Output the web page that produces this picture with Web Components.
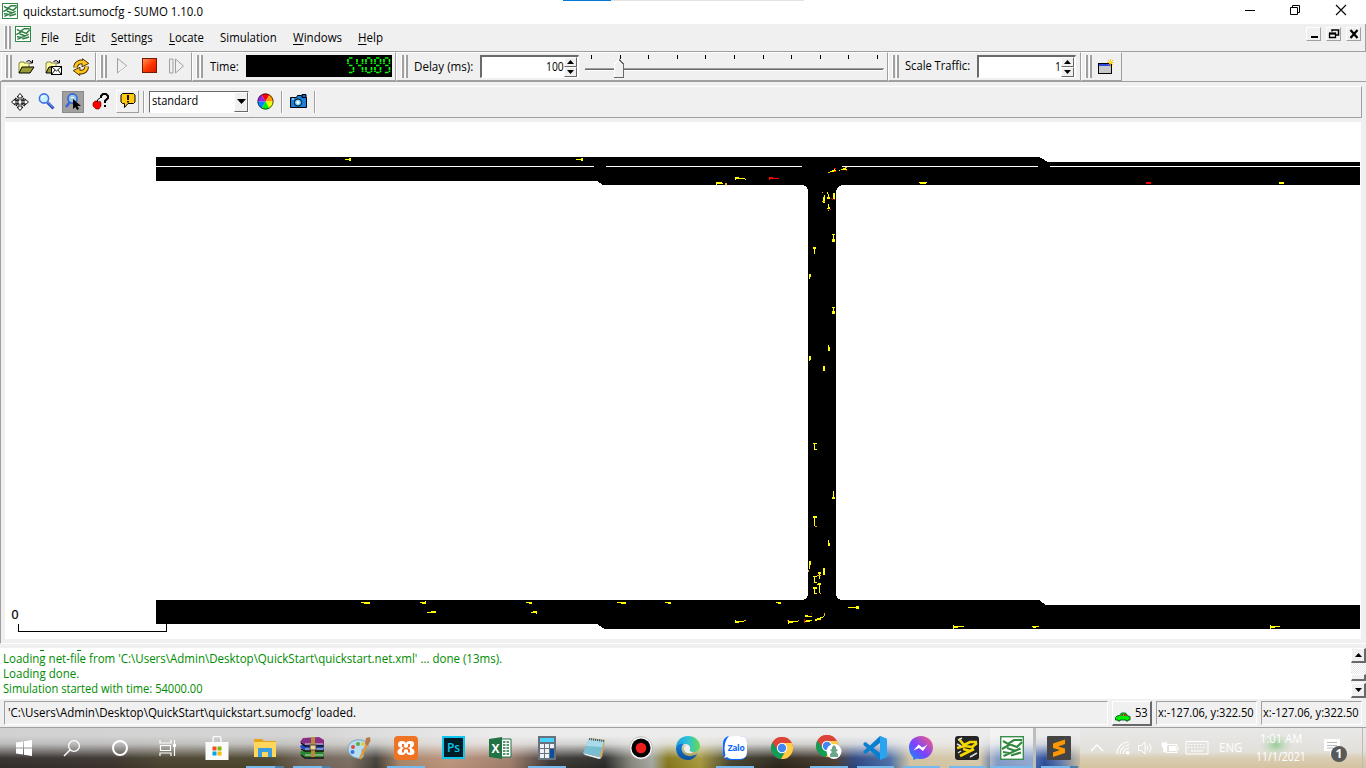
<!DOCTYPE html>
<html lang="en">
<head>
<meta charset="utf-8">
<title>quickstart.sumocfg - SUMO 1.10.0</title>
<style>
html,body{margin:0;height:768px;overflow:hidden;background:#f0f0f0}
body{font:12px/15px "Open Sans","Noto Sans",sans-serif;color:#000}
</style>
</head>
<body>
<sumo-app></sumo-app>
<script>
const def=(name,html,init)=>customElements.define(name,class extends HTMLElement{
  constructor(){super();this.attachShadow({mode:'open'}).innerHTML=html;}
  connectedCallback(){if(init)init.call(this,this.shadowRoot);}
});

/* ---------- icon library ---------- */
const netLines=`M3 5 8 8 14 4 22 4M2 13 10 8.500 17 11 22 6M3.500 20 20.500 12.500M7 12l9 3M3 16l6 1M11 19.500l10-3`;
const logo=`<rect x=".5" y=".5" width="15" height="15" fill="#fff" stroke="#2f8b45"/><path transform="scale(.667)" d="${netLines}" fill="none" stroke="#2f7f42" stroke-width="2.200"/>`;
const folder=`<path d="M1 14V4h1V3h4v1h5v4" fill="#ffff9c" stroke="#84844a"/><path d="M1 14 4 8h12l-4 6z" fill="#9a9a35" stroke="#000"/><path d="M8.500 2.500Q11 0 14 3.500M14.500 1v3H11.500" fill="none" stroke="#000"/>`;
const chrome=`<circle cx="12" cy="12" r="11" fill="#db4437"/><path d="M2.500 6.500A11 11 0 0 0 11 23l5-8.700L12 12l-4 2.300z" fill="#0f9d58"/><path d="M12 7h9.800A11 11 0 0 1 11 23l5.200-9z" fill="#ffcd40"/><path d="M2.500 6.500 8 14 12 7h9.800A11 11 0 0 0 2.500 6.500" fill="#db4437"/><circle cx="12" cy="12" r="5.200" fill="#fff"/><circle cx="12" cy="12" r="4.200" fill="#4285f4"/>`;
const ICONS={
logo:['16',logo],
open:['17',folder],
openview:['17',folder+`<rect x="6.500" y="7.500" width="10" height="8" fill="#fff" stroke="#000"/><path d="M7 8l4.500 4 4.500-4M7 15l3-4M16 15l-3-4" fill="none" stroke="#000" stroke-width=".9"/>`],
reload:['18',`<path d="M3.600 9.500A5.500 5.500 0 0 1 12 4.800M14.600 8.500A5.500 5.500 0 0 1 6.200 13.300" fill="none" stroke="#4a3300" stroke-width="4.600"/><path d="M10.500 .8 16.800 5.500 10 8.800zM7.800 17.500 1.200 12.500 8 9.300z" fill="#ffc41f" stroke="#4a3300"/><path d="M3.600 9.500A5.500 5.500 0 0 1 12 4.800M14.600 8.500A5.500 5.500 0 0 1 6.200 13.300" fill="none" stroke="#ffc41f" stroke-width="2.700"/>`],
play:['16',`<path d="M3.500 .5v14.500L13 8z" fill="#f0f0f0" stroke="#a0a0a0"/><path d="M4.500 15 14 8" stroke="#fff"/>`],
stop:['16',`<defs><linearGradient id="g" x2="1" y2="1"><stop stop-color="#ff9a68"/><stop offset=".5" stop-color="#ff3800"/><stop offset="1" stop-color="#d01c00"/></linearGradient></defs><rect x=".5" y=".5" width="14" height="14" fill="url(#g)" stroke="#781800"/>`],
step:['16',`<path d="M.5 1v14h3.500V1zM6.500 1v14L14.500 8z" fill="#f0f0f0" stroke="#a0a0a0"/>`],
newwin:['17',`<rect x=".5" y="4.500" width="13" height="10" fill="#c8c8c8" stroke="#000"/><rect x="1" y="5" width="12" height="2" fill="#3048e0"/><path d="M12.500 0v8M9 3.500h7M10 1l5 5M15 1l-5 5" stroke="#ffb500" stroke-dasharray="1.500 .6"/><rect x="11.500" y="2.500" width="2" height="2" fill="#fff200"/>`],
move:['18',`<path d="M9 .5 12 4h-2v3.500L13 5l-.5 2.500L10.500 8H14V6l3.500 3L14 12v-2h-3.500l2.500.5L13.500 13 10 10.500V14h2l-3 3.500L6 14h2v-3.500L5 13l.5-2.500L7.500 10H4v2L.5 9 4 6v2h3.500L5 7.500 4.500 5 8 7.500V4H6z" fill="#fff" stroke="#000" stroke-width=".9"/>`],
zoom:['17',`<path d="M9.500 9.500 15.500 15.500" stroke="#2248c0" stroke-width="3"/><path d="M9.500 9 15 14.500" stroke="#83b9ff"/><circle cx="6" cy="5.500" r="4.600" fill="#c9f2ff" stroke="#4274e8" stroke-width="1.600"/><path d="M3.500 5Q4 3 6 3" fill="none" stroke="#fff" stroke-width="1.500"/>`],
zoomsel:['17',`<path d="M5 9 1 14" stroke="#3564e0" stroke-width="2.400"/><circle cx="7.500" cy="5.500" r="4.600" fill="#9fc8dc" stroke="#3564e0" stroke-width="1.600"/><path d="M8 6v10l2.500-2 1.500 3 2-1L12.500 13h3.500z" fill="#000"/><path d="M6 4.500h3" stroke="#fff"/>`],
what:['17',`<path d="M9 5V3l2-2h3l2 2v2l-3 3v2M13 12v2" fill="none" stroke="#000" stroke-width="2"/><path d="M9 5.500h1" stroke="#fff"/><path d="M1 10l2-2h2l1 1 2-1 1 2v3l-2 3H4l-3-3z" fill="#f00" stroke="#600" stroke-width=".6"/><path d="M5 9Q5 6 8 5" fill="none" stroke="#000"/>`],
tip:['16',`<path d="M2.500.5h11l1.500 1.500v7l-1.500 1.500H8L4.500 14.500v-4h-2L1 9V2z" fill="#ffc90e" stroke="#000"/><path d="M8 2v5M8 8v1.500" stroke="#000" stroke-width="1.800"/>`],
wheel:['17',`<g><path d="M8.500 8.500 4.500 1.600A8 8 0 0 1 12.500 1.600z" fill="#f00"/><path d="M8.500 8.500 12.500 1.600A8 8 0 0 1 16.500 8.500z" fill="#ff9c00"/><path d="M8.500 8.500H16.500A8 8 0 0 1 12.500 15.400z" fill="#ef0"/><path d="M8.500 8.500 12.500 15.400A8 8 0 0 1 4.500 15.400z" fill="#0e1"/><path d="M8.500 8.500 4.500 15.400A8 8 0 0 1 .5 8.500z" fill="#08f"/><path d="M8.500 8.500H.5A8 8 0 0 1 4.500 1.600z" fill="#a020e0"/></g><circle cx="8.500" cy="8.500" r="7.600" fill="none" stroke="#222" stroke-width=".8"/>`],
camera:['17',`<path d="M.5 4.500h6l1-2h4l1 2h4v10H.5z" fill="#1c7fd8" stroke="#000"/><path d="M12 1.500h4v3h-4z" fill="#1660c0" stroke="#000"/><circle cx="8" cy="9.500" r="3.600" fill="#70d4ff" stroke="#000"/><circle cx="8" cy="9.500" r="1.500" fill="#fff"/><path d="M2 6h2" stroke="#fff"/>`],
car:['16',`<path d="M.5 9V6.500L2 5l2.500-.5L6.500 2h4L13 5l2 .5V9h-2v1h-2V9H5v1H3V9z" fill="#0e0" stroke="#052" stroke-width=".9"/><path d="M5.500 5 7 3h1v2zM9 3h1.500L12 5H9z" fill="#a33"/>`],
start:['18',`<g fill="#fff"><path d="M1 3.500 8 2.500V8.600H1zM9 2.300 17 1v7.600H9zM1 9.500H8V15.600L1 14.600zM9 9.500H17V17L9 15.800z"/></g>`],
search:['18',`<circle cx="11" cy="7" r="5.400" fill="none" stroke="#fff" stroke-width="1.300"/><path d="M7 11 1 17" stroke="#fff" stroke-width="1.500"/>`],
cortana:['18',`<circle cx="9" cy="9" r="7" fill="none" stroke="#fff" stroke-width="2"/>`],
taskview:['18',`<path d="M1 1v3h11V1M1 17v-3h11v3M1.500 6.500h10v5h-10zM15.500 1v16" fill="none" stroke="#fff" stroke-width="1.200"/><rect x="14" y="5" width="3" height="3" fill="#fff"/>`],
store:['24',`<path d="M8 7V2.500Q8 .5 10 .5h4q2 0 2 2V7" fill="none" stroke="#f8f8f8" stroke-width="1.500"/><path d="M.5 6h23v18H.5z" fill="#fafafa"/><path d="M7.500 10.500h4v4h-4z" fill="#f25022"/><path d="M12.500 10.500h4v4h-4z" fill="#7fba00"/><path d="M7.500 15.500h4v4h-4z" fill="#00a4ef"/><path d="M12.500 15.500h4v4h-4z" fill="#ffb900"/>`],
folder2:['24',`<path d="M1 3h8l2 2h12v16H1z" fill="#e5a51a"/><path d="M1 6h22v15H1z" fill="#ffd65c"/><path d="M5 21v-8q0-1 1-1h12q1 0 1 1v8h-4v-5H9v5z" fill="#3a9de0"/>`],
rar:['26',`<path d="M4 3 20 2l5 3v5L5 11 1 7z" fill="#8a2d86"/><path d="M2 10l22-1 1 6H5l-4-3z" fill="#2248c8"/><path d="M2 16l22-1 1 7H5l-4-3z" fill="#28862c"/><path d="M2 8l4 3h19M2 14l4 2h19M2 20l4 3h19" stroke="#151515" fill="none" stroke-width="1.300"/><path d="M6 9h18M6 14h18M6 20h18" stroke="#d5d5cc"/><path d="M12 2h4v20h-4z" fill="#b78b39"/><rect x="11" y="10" width="6" height="5" fill="#e8d69c" stroke="#543"/>`],
paint:['24',`<path d="M1 13C1 6 8 3 14 4s9 6 6 8-5 0-5 3 3 3 1 6-15 1-15-8z" fill="#b8dcf0" stroke="#78a5c0"/><circle cx="6" cy="11" r="2" fill="#e04a3c"/><circle cx="11" cy="8" r="2" fill="#53ad43"/><circle cx="5.500" cy="16" r="2" fill="#3f72d8"/><circle cx="16" cy="8" r="1.800" fill="#f0c630"/><path d="M13 23 20 8" stroke="#e09a38" stroke-width="2.600"/><path d="m18 8 1-6 4-1 .5 4-3 5z" fill="#b87948"/>`],
xampp:['24',`<rect width="24" height="24" rx="4" fill="#ee7322"/><path d="M8 5q4 0 4 3 0-3 4-3 5 0 4 4-.5 2-3 3 3 1 3.500 3 .5 4-4 4-4 0-4.500-3-.5 3-4.500 3-4.500 0-4-4 .5-2 3.500-3-3-1-3-3-.3-4 4-4z" fill="#fff"/><path d="M8 8h2v3q2 1.500 4 0V8h2v3l-2 1 2 1.500v3h-2v-2.500q-2-1.500-4 0V16.500H8v-3l2-1.500-2-1z" fill="#ee7322"/>`],
ps:['24',`<rect x="2" y="1" width="21" height="21" fill="#001d26" stroke="#0ac5ee" stroke-width="2"/><text x="12.500" y="16" text-anchor="middle" font-size="12" font-weight="600" fill="#0ac5ee" font-family="Open Sans">Ps</text>`],
excel:['24',`<path d="M12 3h11v18H12z" fill="#fff" stroke="#217346"/><path d="M15 6h6M15 9h6M15 12h6M15 15h6M15 18h6" stroke="#217346" stroke-width="1.500"/><path d="M18 4v16" stroke="#fff"/><path d="M1 3 14 1v22L1 21z" fill="#217346"/><text x="7.500" y="16.500" text-anchor="middle" font-size="12" font-weight="700" fill="#fff" font-family="Open Sans">X</text>`],
calc:['24',`<rect x="3" width="18" height="24" fill="#68727f"/><rect x="5" y="2" width="14" height="4" fill="#48d2fa"/><g fill="#eef1f5"><path d="M5 8h4v4H5zM10 8h4v4h-4zM15 8h4v4h-4zM5 13h4v4H5zM10 13h4v4h-4zM5 18h4v4H5zM10 18h4v4h-4z"/></g><path d="M15 13h4v9h-4z" fill="#0d4f9c"/>`],
note:['24',`<path d="M8 2 23 4l-3 17-3 1z" fill="#c9a869"/><path d="M7 3 22 5 17 21 1 17z" fill="#79bdd0"/><path d="M7 3 22 5 20 11 4 10z" fill="#a9dce8"/><path d="M1 17 17 21 20 22 17 23 3 19z" fill="#e8eef0"/><path d="M7 3 22 5" stroke="#456" stroke-dasharray="1 1" stroke-width="2"/>`],
rec:['24',`<circle cx="12" cy="12" r="11.300" fill="#fff" stroke="#999" stroke-width=".6"/><circle cx="12" cy="12" r="9.600"/><circle cx="12" cy="12" r="5.300" fill="#f01d1d"/>`],
edge:['24',`<defs><linearGradient id="e" x2="1"><stop stop-color="#209de5"/><stop offset=".5" stop-color="#2cc3d5"/><stop offset="1" stop-color="#69d94e"/></linearGradient><linearGradient id="f" y2="1" x2="0"><stop stop-color="#0d80d8"/><stop offset="1" stop-color="#0b4f9e"/></linearGradient></defs><path d="M0 12C0 5 5 0 12 0s12 5 12 10c0 4-3 6-7 6-3 0-4-1-3-2.500C15 11 13 8 9 8c-4 0-8 1-9 4z" fill="url(#e)"/><path d="M0 12c1-4 5-5 8-4-2 1-3 4-2 7 2 5 8 7 15 3-2 4-6 6-9 6C5 24 0 19 0 12z" fill="url(#f)"/><path d="M8.500 8C12 8 15 10.500 14 13.500c-1 1.500 0 2.500 3 2.500-1 2-9 2-9-3 0-2 1-3 2.500-4z" fill="#eee"/>`],
zalo:['24',`<rect width="24" height="24" rx="7" fill="#0868ff"/><path d="M6 0h11q7 0 7 7v9q0 7-7 7H9q-3 0-5-2-2 1-3 .5Q3 20 2 17 0 6 6 0z" fill="#fff"/><text x="13" y="14.500" text-anchor="middle" font-size="8.500" font-weight="700" fill="#0868ff" font-family="Open Sans" letter-spacing="-.3">Zalo</text>`],
chrome:['24',chrome],
chrome2:['30',`<g transform="translate(1 1)">${chrome}<circle cx="19" cy="17.500" r="7.500" fill="#fff"/><path d="M15 23v-3l2-2-2-2 2-1v-2l2-2 2 2v2l2 1-2 2 2 2v3z" fill="#6ea68c"/></g>`],
code:['24',`<path d="M17 0 24 3v18l-7 3L7 14.500 2.500 18 .5 17V15L4 12 .5 9V7l2-1L7 9.500zM17 7l-6.500 5 6.500 5z" fill="#0a7fd0"/><path d="M17 0 24 3v18l-7 3z" fill="#2aa4ee"/>`],
mess:['24',`<defs><linearGradient id="m" x2="1" y1="1" y2="0"><stop stop-color="#0695ff"/><stop offset=".45" stop-color="#7c40ff"/><stop offset="1" stop-color="#ff6375"/></linearGradient></defs><path d="M12 0c7 0 12 5 12 11.300S19 23 12 23q-2 0-4-.5L4.500 24 4 21Q0 17.500 0 11.300C0 5 5 0 12 0z" fill="url(#m)"/><path d="m4.500 14.500 5-6 4 3 5-3-4.500 6.500-4-3z" fill="#fff"/>`],
net:['24',`<rect width="24" height="24" rx="3" fill="#242424"/><path d="M4 3 9 9 15 6h7M2 12 10 10 17 11 22 7M5 20l14-7M8 13l7 2" fill="none" stroke="#f5d800" stroke-width="2.700"/><path d="M3 4 7 2M2 8l4 2M15 21l7-4M3 17l3-2" stroke="#ddd" stroke-width="1.500"/>`],
sumo:['24',`<rect x=".7" y=".7" width="22.600" height="22.600" fill="#fff" stroke="#3c8c4c" stroke-width="1.400"/><path d="${netLines}" fill="none" stroke="#34873f" stroke-width="2.200"/>`],
sublime:['24',`<rect width="24" height="24" rx="1" fill="#444"/><path d="m6 7.500 12-4v4.500l-7 2.400 7 2.200v4.400l-12 4v-4.500l7-2.500-7-2z" fill="#ff9800"/>`],
chev:['16',`<path d="m2 11 6-6 6 6" fill="none" stroke="#fff" stroke-width="1.300"/>`],
wifi:['16',`<g fill="none" stroke="#fff" stroke-width="1.200"><path d="M2 14A12 12 0 0 1 14 2M5 14a9 9 0 0 1 9-9M8 14a6 6 0 0 1 6-6M11 14a3 3 0 0 1 3-3"/></g><circle cx="13" cy="13" r="1.500" fill="#fff"/>`],
sound:['16',`<path d="M1.500 5.500h3L8 2v12l-3.500-3.500h-3z" fill="none" stroke="#fff"/><path d="M10 5.500q2 2.500 0 5M12 3.500q4 4.500 0 9" fill="none" stroke="#fff"/>`],
batt:['18',`<path d="M5.500 5.500h10.500v8H5.500zM17 8v3" fill="none" stroke="#fff"/><path d="M8 7h7v5H8z" fill="#fff"/><path d="M1 4h5v3l-1.500 2v4h-2V9L1 7zM2 2v3M5 2v3" fill="#fff" stroke="#fff" stroke-width=".7"/>`],
kbd:['24',`<path d="M1 5.500h22v12.500H1z" fill="none" stroke="#fff"/><path d="M3 8.500h18M3 11.500h18" stroke="#fff" stroke-dasharray="1.500 1.500"/><path d="M6 15h12" stroke="#fff"/>`],
notif:['26',`<path d="M3 2h16v12h-6l-4 4v-4H3z" fill="#fff"/><path d="M6 5.500h10M6 8.500h10M6 11h6" stroke="#bbb"/><circle cx="18" cy="17" r="8" fill="#595959"/><text x="18" y="21.300" font-size="12" font-weight="700" text-anchor="middle" fill="#fff" font-family="Open Sans">1</text>`],
min:['14',`<path d="M2 7.500h10" stroke="#000"/>`],
rest:['14',`<path d="M1.500 4.500h7v7h-7zM3.500 4.500v-2h7v7h-2" fill="none" stroke="#000"/>`],
close:['14',`<path d="m2 2 10 10M12 2 2 12" stroke="#000" stroke-width="1.100"/>`],
mmin:['12',`<path d="M3 9h7" stroke="#000" stroke-width="2"/>`],
mrest:['12',`<path d="M4 3.500V2h6.500v5H8" fill="none" stroke="#000" stroke-width="1.500"/><path d="M1.500 5.500h6v4h-6z" fill="none" stroke="#000" stroke-width="1.300"/><path d="M1 5.500h7" stroke="#000" stroke-width="2"/>`],
mclose:['12',`<path d="m2.500 2 7 8M9.500 2l-7 8" stroke="#000" stroke-width="2.200"/>`]
};
def('ui-icon','<style>:host{display:block;flex:none}svg{display:block}</style>',function(r){
  const [s,b]=ICONS[this.getAttribute('name')];
  this.style.width=this.style.height=s+'px';
  r.innerHTML+=`<svg width="${s}" height="${s}" viewBox="0 0 ${s} ${s}">${b}</svg>`;
});

/* toolbar grip, bevel group, separator */
def('tool-grip','<style>:host{display:flex;gap:1px;flex:none;height:23px}i{width:1px;background:#fff;border-right:2px solid #a0a0a0;box-sizing:content-box}</style><i></i><i></i>');
def('tool-group',`<style>:host{display:flex;flex:none;box-sizing:border-box;height:29px;border:1px solid #a0a0a0;border-top-color:#fff;border-left-color:#fff;padding-left:3px;align-items:flex-start}tool-grip{margin-top:2px}</style><tool-grip></tool-grip><slot></slot>`);
def('tool-sep','<style>:host{display:block;flex:none;width:1px;height:22px;background:#a0a0a0;border-right:1px solid #fff}</style>');
def('raised-box','<style>:host{display:flex;flex:none;align-items:center;justify-content:center;box-sizing:border-box;background:#f0f0f0;border:1px solid #a0a0a0;border-top-color:#fff;border-left-color:#fff}</style><slot></slot>');
def('sunken-box','<style>:host{display:flex;flex:none;align-items:center;box-sizing:border-box;border:1px solid #fff;border-top-color:#a0a0a0;border-left-color:#a0a0a0}</style><slot></slot>');

/* seven-segment clock */
def('lcd-display','<style>:host{display:flex;flex:none;width:146px;height:22px;background:#000;justify-content:flex-end;box-sizing:border-box;padding:2px 1px 0 0}svg{display:block}</style>',function(r){
  const map={5:'afgcd',4:'fgbc',0:'abcdef',8:'abcdefg',9:'abcdfg'};
  const seg={a:'M2 1h4',g:'M2 8.500h4',d:'M2 15.500h4',f:'M1 2v5',b:'M6.500 2v5',e:'M1 10v5',c:'M6.500 10v5'};
  const v=this.getAttribute('value');
  this.setAttribute('role','img');this.setAttribute('aria-label',v);
  r.innerHTML+=`<svg width="44" height="17" stroke="#0f0" stroke-width="1.700" stroke-dasharray="3 .5">${[...v].map((d,i)=>`<g transform="translate(${i*9} 0)">${[...map[d]].map(k=>`<path d="${seg[k]}"/>`).join('')}</g>`).join('')}</svg>`;
});

/* numeric entry with arrows */
def('num-spinner',`<style>:host{display:flex;flex:none;box-sizing:border-box;height:23px;background:#fff;border:1px solid #fff;border-top:2px solid #6a6a6a;border-left:2px solid #6a6a6a;justify-content:flex-end;align-items:center}
.b{display:grid;grid-template-rows:10px 10px;width:13px;height:20px;margin-right:1px}.b i{background:#f0f0f0;box-sizing:border-box;border:1px solid #696969;border-top-color:#fff;border-left-color:#fff;display:flex;align-items:center;justify-content:center}
.b svg{display:block}</style><slot></slot><div class="b"><i><svg width="7" height="4"><path d="M0 4 3.500 0 7 4z"/></svg></i><i><svg width="7" height="4"><path d="M0 0 3.500 4 7 0z"/></svg></i></div>`);
def('delay-slider','<style>:host{display:block;flex:none;width:300px;height:25px}svg{display:block}</style>',function(r){
  let t='';for(let i=0;i<11;i++)t+=`<rect x="${Math.round(6+i*28.600)}" y="1" width="1" height="4"/>`;
  r.innerHTML+=`<svg width="300" height="25" shape-rendering="crispEdges">${t}<rect y="14" width="299" height="1" fill="#a0a0a0"/><rect y="15" width="298" height="1" fill="#696969"/><rect x="1" y="16" width="298" height="1" fill="#fff"/><path d="M29 10 34 5.500 39 10V23H29z" fill="#f0f0f0"/><path d="M29.500 23V10L34 5.500" fill="none" stroke="#fff"/><path d="M34 5.500 38.500 10V23.500H29" fill="none" stroke="#696969"/></svg>`;
});
def('combo-box',`<style>:host{display:flex;flex:none;box-sizing:border-box;width:100px;height:22px;background:#fff;border:1px solid #fff;border-top:1px solid #696969;border-left:1px solid #696969;padding-left:2px;align-items:center;justify-content:space-between}
i{width:14px;height:20px;background:#f0f0f0;box-sizing:border-box;border:1px solid #696969;border-top-color:#fff;border-left-color:#fff;display:flex;align-items:center;justify-content:center}</style><slot></slot><i><svg width="9" height="5"><path d="M0 0h9L4.500 5z"/></svg></i>`);

/* chrome */
def('title-bar',`<style>:host{display:flex;flex:none;position:relative;height:24px;background:#fff;align-items:center;padding:0 18px 0 2px}
.p{position:absolute;left:563px;top:0;width:241px;height:1px;background:linear-gradient(90deg,#0078d7 48px,#e3e3e3 48px)}
.t{margin:0 auto 0 5px}.w{display:flex;gap:31.500px;margin-top:-4px}ui-icon.i{margin-top:-2px}</style>
<div class="p"></div><ui-icon class="i" name="logo"></ui-icon><fit-text class="t" w="180">quickstart.sumocfg - SUMO 1.10.0</fit-text><div class="w"><ui-icon name="min"></ui-icon><ui-icon name="rest"></ui-icon><ui-icon name="close"></ui-icon></div>`);
def('menu-bar',`<style>:host{display:flex;flex:none;box-sizing:border-box;height:28px;border-bottom:1px solid #a0a0a0;border-right:1px solid #a0a0a0;padding:2px 4px 0 4px;align-items:flex-start}
.l{margin-left:4px}.m{display:flex;gap:16px;margin:5px auto 0 10px}.b{display:flex;gap:5px;margin-top:1px}raised-box{width:15px;height:14px}</style>
<tool-grip></tool-grip><ui-icon class="l" name="logo"></ui-icon>
<div class="m"><fit-text w="18"><u>F</u>ile</fit-text><fit-text w="20"><u>E</u>dit</fit-text><fit-text w="42"><u>S</u>ettings</fit-text><fit-text w="35"><u>L</u>ocate</fit-text><fit-text w="57">Simulation</fit-text><fit-text w="49"><u>W</u>indows</fit-text><fit-text w="25"><u>H</u>elp</fit-text></div>
<div class="b"><raised-box><ui-icon name="mmin"></ui-icon></raised-box><raised-box><ui-icon name="mrest"></ui-icon></raised-box><raised-box><ui-icon name="mclose"></ui-icon></raised-box></div>`);
def('main-toolbar',`<style>:host{display:flex;flex:none;height:29px;border-bottom:1px solid #a0a0a0;padding-left:1px}
ui-icon{margin-top:6px}.lb{margin-top:7px}</style>
<tool-group style="width:95px"><ui-icon name="open" style="margin-left:6px"></ui-icon><ui-icon name="openview" style="margin-left:10px"></ui-icon><ui-icon name="reload" style="margin-left:10px;margin-top:5px"></ui-icon></tool-group>
<tool-group style="width:96px"><ui-icon name="play" style="margin:5px 0 0 7px"></ui-icon><ui-icon name="stop" style="margin:5px 0 0 12px"></ui-icon><ui-icon name="step" style="margin:5px 0 0 11px"></ui-icon></tool-group>
<tool-group style="width:204px"><fit-text class="lb" w="29" style="margin-left:7px">Time:</fit-text><lcd-display value="54089" style="margin:2px 0 0 7px"></lcd-display></tool-group>
<tool-group style="width:492px;padding-left:4px"><fit-text class="lb" w="59" style="margin-left:6px">Delay (ms):</fit-text><num-spinner style="width:99px;margin:2px 0 0 7px"><fit-text w="18">100</fit-text></num-spinner><delay-slider style="margin:1px 0 0 6px"></delay-slider></tool-group>
<tool-group style="width:193px"><fit-text w="65" style="margin:6px 0 0 6px">Scale Traffic:</fit-text><num-spinner style="width:99px;margin:2px 0 0 7px"><fit-text w="6">1</fit-text></num-spinner></tool-group>
<tool-group style="width:41px"><ui-icon name="newwin" style="margin-left:6px"></ui-icon></tool-group>`);
def('view-toolbar',`<style>:host{display:flex;flex:none;box-sizing:border-box;height:32px;border:1px solid #a0a0a0;border-top-color:#fff;border-left-color:#fff;padding-left:5px;align-items:center}
.on{display:flex;box-sizing:border-box;width:22px;height:22px;background:#a0a0a0;border:1px solid #8a8a8a;align-items:center;justify-content:center}ui-icon,tool-sep,.on,combo-box,raised-box{margin-top:-1px}</style>
<ui-icon name="move"></ui-icon><ui-icon name="zoom" style="margin-left:9px"></ui-icon><div class="on" style="margin-left:7px"><ui-icon name="zoomsel"></ui-icon></div><ui-icon name="what" style="margin-left:8px"></ui-icon><raised-box style="width:23px;height:23px;margin-left:7px"><ui-icon name="tip"></ui-icon></raised-box><tool-sep style="margin-left:4px;margin-right:4px"></tool-sep><combo-box><fit-text w="46">standard</fit-text></combo-box><ui-icon name="wheel" style="margin-left:8px;margin-right:7px"></ui-icon><tool-sep></tool-sep><ui-icon name="camera" style="margin-left:7px;margin-right:7px"></ui-icon><tool-sep></tool-sep>`);

/* road network; coordinates are window pixels via the viewBox */
def('network-view','<style>:host{display:block;flex:none;height:517px;width:1356px;background:#fff}svg{display:block}</style>',function(r){
  const Y='#ff0',R='#f00',O='#fa0';
  const cars=[
  [345,159,6,1],[349,158,2,3],[576,159,6,1],[581,158,2,3],[716,182,6,2],[716,184,1,1],[722,183,1,1],[725,183,2,2,O],
  [735,177,4,2],[735,179,1,1],[738,178,7,1],[745,179,1,1],[769,177,4,2,R],[769,179,1,1,R],[772,178,7,1,R],
  [828,172,2,1,O],[830,171,6,1],[832,170,4,1],[834,169,1,1],[834,168,2,1,R],[834,171,2,1,R],[839,170,1,1],[841,169,6,1],[843,168,3,1],[845,167,2,1,O],[846,170,1,1,R],
  [919,182,8,1],[920,183,6,1],[1146,182,5,2,R],[1279,182,5,2],
  [822,192,1,1,O],[824,195,1,2],[823,197,2,6],[822,201,3,1,O],[827,192,1,2],[828,194,1,3],[827,197,3,2],[831,198,1,1,R],[833,193,2,6],[832,199,1,1,R],[834,199,1,1,R],[828,204,1,3],[828,207,2,2],[827,208,3,1],[830,209,1,1,R],[828,210,1,1,O],
  [833,234,1,7],[832,234,3,1],[832,239,3,3],[813,247,3,2],[814,248,1,6],[809,274,2,3],[809,276,1,3],[833,307,1,6],[832,307,3,1],[832,311,3,3],[828,345,1,6],[829,347,1,4],[809,356,2,4],[809,360,1,1],[823,366,2,5],
  [813,443,4,1],[814,444,1,6],[814,449,3,1],[833,491,1,6],[832,497,3,2],[813,516,4,2],[814,518,1,8],[815,526,2,1,O],[828,540,1,6],[829,543,1,3],
  [809,561,2,4],[809,565,1,4],[808,570,1,2,O],[823,568,2,7],[818,572,3,2],[819,574,1,5],[817,575,4,1,O],[813,576,4,1],[814,577,1,5],[814,582,3,1],[818,583,3,2],[819,585,1,8],[817,584,4,1],[813,587,4,2],[814,589,1,4],[814,593,3,1],[820,593,1,1,O],
  [361,602,9,1],[364,603,6,1],[420,602,6,1],[422,603,4,1],[425,601,1,2],[427,612,9,1],[431,611,5,1],[526,602,6,1],[529,603,3,1],[531,612,6,1],[533,611,4,1],[536,612,1,2],[617,602,9,1],[621,603,5,1],[665,602,6,1],[668,603,3,1],[776,602,5,1],[778,603,3,1],
  [735,620,1,3],[736,621,3,2],[738,621,6,1],[744,620,2,1,O],[787,620,1,1,R],[788,620,1,4],[788,621,5,2],[792,621,6,1],[798,620,1,1,O],[805,615,3,2],[806,616,6,1],[811,613,1,1,R],[804,619,1,4,R],[805,621,5,1],[806,620,6,1],[815,619,2,2],[817,618,4,2],[820,617,3,1],[823,616,1,1],[824,613,1,3,O],
  [848,607,9,1],[856,606,3,3],[953,625,1,4],[954,626,4,2],[957,626,7,1],[1032,626,7,1],[1033,627,3,1],[1270,625,1,4],[1271,626,4,2],[1274,626,6,1]];
  r.innerHTML+=`<svg width="1356" height="517" viewBox="5 122 1356 517" shape-rendering="crispEdges">
  <path d="M156 157H1039L1043 159 1048 162H1360V185H843Q837 186 836 191V595Q837 599 841 600H1039L1046 605H1360V629H605L603 628 597 624H156V600H803Q807 599 808 594V191Q807 186 803 185H603L597 181H156Z"/>
  <path d="M156 166.500H594M606 166.500H802M842 166.500H1038M1050 166.500H1360" stroke="#fff"/>
  ${cars.map(c=>`<rect x="${c[0]}" y="${c[1]}" width="${c[2]}" height="${c[3]}" fill="${c[4]||Y}"/>`).join('')}
  <path d="M18.500 624V631.500H166.500V624" fill="none" stroke="#000"/>
  <text x="11.500" y="619" font-size="12.500" font-family="Liberation Sans" stroke="#000" stroke-width=".2">0</text></svg>`;
});

def('log-pane',`<style>:host{display:flex;flex:none;height:51px;background:#fff;color:#008c00}
.t{flex:1;padding:3.500px 0 0 3px;background:linear-gradient(#008c00,#008c00) 40px 2px/4px 1px no-repeat,linear-gradient(#008c00,#008c00) 77px 2px/4px 1px no-repeat}fit-text{display:block}
.s{width:15px;display:flex;flex-direction:column;background:repeating-conic-gradient(#fff 0 25%,#e6e6e6 0 50%) 0 0/2px 2px}.s raised-box{width:15px;height:15px;border-color:#fff #696969 #696969 #fff;border-width:1px 2px 2px 1px}</style>
<div class="t"><fit-text w="499">Loading net-file from 'C:\\Users\\Admin\\Desktop\\QuickStart\\quickstart.net.xml' ... done (13ms).</fit-text><fit-text w="76">Loading done.</fit-text><fit-text w="200">Simulation started with time: 54000.00</fit-text></div>
<div class="s"><raised-box><svg width="7" height="4"><path d="M0 4 3.500 0 7 4z"/></svg></raised-box><raised-box style="height:7px;margin:11px 0 2px"></raised-box><raised-box><svg width="7" height="4"><path d="M0 0 3.500 4 7 0z"/></svg></raised-box></div>`);
def('status-bar',`<style>:host{display:flex;flex:none;box-sizing:border-box;height:29px;border-bottom:1px solid #a0a0a0;padding:2px 4px 0;gap:4px}
sunken-box{height:24px;padding-left:3px;width:101px}.m{flex:1}raised-box{width:40px;height:25px;border-color:#fff #696969 #696969 #fff;border-width:1px 2px 2px 1px;gap:4px}raised-box ui-icon{margin-top:11px}sunken-box.c{padding-left:1px}</style>
<sunken-box class="m"><fit-text w="348">'C:\\Users\\Admin\\Desktop\\QuickStart\\quickstart.sumocfg' loaded.</fit-text></sunken-box><raised-box><ui-icon name="car"></ui-icon><fit-text w="13">53</fit-text></raised-box><sunken-box class="c"><fit-text w="96">x:-127.06, y:322.50</fit-text></sunken-box><sunken-box class="c"><fit-text w="96">x:-127.06, y:322.50</fit-text></sunken-box>`);

/* Windows taskbar */
def('task-item',`<style>:host{display:flex;flex:none;box-sizing:border-box;width:47px;height:40px;align-items:center;justify-content:center;position:relative}
:host([run])::after{content:"";position:absolute;left:5px;right:4px;bottom:0;height:2px;background:#76b9ed}
:host([multi])::after{background:linear-gradient(90deg,#76b9ed 29px,#4d80a6 29px)}
:host([active]){background:#ffffff60;border-right:3px solid #bdbdbd}:host([active])::after{left:0;right:0}</style>`,function(r){
  const i=document.createElement('ui-icon');i.setAttribute('name',this.getAttribute('icon'));r.append(i);
});
def('task-bar',`<style>:host{display:flex;flex:none;height:40px;position:relative;color:#fff;background:#ececec;isolation:isolate;overflow:hidden}
.bg{position:absolute;inset:0;z-index:-1;background:linear-gradient(90deg,#120b08 0,#21160f 110px,#352c13 160px,#3d3515 270px,#665546 300px,#79695b 350px,#37342c 376px,#aa8463 400px,#bd9278 450px,#9b7a68 510px,#393431 550px,#272926 605px,#86867c 632px,#a2a59e 652px,#827418 668px,#a39639 700px,#43412e 730px,#29241a 780px,#46382a 835px,#28437f 855px,#486ba5 890px,#d0c19e 910px,#d4c6a7 980px,#3158a0 998px,#4c70b0 1032px,#274895 1045px,#5a73a5 1060px,#cfbf9b 1082px,#d2c19c 1366px);-webkit-mask:linear-gradient(transparent 8px,#0002 16px,#0008 23px,#000e 30px,#000);mask:linear-gradient(transparent 8px,#0002 16px,#0008 23px,#000e 30px,#000)}
.sh{position:absolute;inset:0;z-index:-1;background:linear-gradient(90deg,#8884 0,#7773 300px,transparent 500px)}
.r{position:absolute;left:1080px;right:0;top:0;bottom:0;z-index:-1;background:radial-gradient(ellipse 16px 11px at 196px 17px,#9ccc9b 0,#b9d9b680 60%,transparent),linear-gradient(#e8e8e8 0,#e3e0da 24px,#d9cdb3 30px,#d4c39f 40px)}
.w{width:48px}.n{width:46px}.c{display:flex;flex-direction:column;gap:3px;align-items:center;width:52px;margin-left:13px}.tray{display:flex;align-items:center;margin-left:7px}.d{width:1px;height:40px;background:#bbb;margin-left:15px}</style>
<div class="bg"></div><div class="sh"></div><div class="r"></div>
<task-item class="w" icon="start"></task-item><task-item class="w" icon="search"></task-item><task-item class="w" icon="cortana"></task-item><task-item class="w" icon="taskview"></task-item>
<task-item icon="store" style="width:49px"></task-item><task-item icon="folder2" run multi></task-item><task-item icon="rar" run multi></task-item><task-item icon="paint"></task-item><task-item icon="xampp" run></task-item><task-item icon="ps"></task-item><task-item icon="excel"></task-item><task-item icon="calc" run></task-item><task-item icon="note"></task-item><task-item icon="rec"></task-item><task-item icon="edge"></task-item><task-item icon="zalo" run></task-item><task-item icon="chrome"></task-item><task-item icon="chrome2" run></task-item><task-item class="n" icon="code" run></task-item><task-item class="n" icon="mess" run></task-item><task-item class="n" icon="net" run></task-item><task-item class="n" icon="sumo" run active></task-item><task-item class="n" icon="sublime" run multi></task-item>
<div class="tray"><ui-icon name="chev"></ui-icon><ui-icon name="wifi" style="margin-left:10px"></ui-icon><ui-icon name="sound" style="margin-left:6px"></ui-icon><ui-icon name="batt" style="margin-left:8px"></ui-icon><ui-icon name="kbd" style="margin-left:6px"></ui-icon><fit-text w="23" style="margin-left:10px">ENG</fit-text><div class="c"><fit-text w="42">1:01 AM</fit-text><fit-text w="50">11/1/2021</fit-text></div><ui-icon name="notif" style="margin:3px 0 0 14px"></ui-icon><div class="d"></div></div>`);

def('sumo-app',`<style>:host{display:flex;flex-direction:column;width:1366px;height:768px;background:#f0f0f0;overflow:hidden}
.v{display:flex;flex-direction:column;gap:4px;flex:none;box-sizing:border-box;height:562px;border-left:1px solid #a0a0a0;border-bottom:1px solid #fff;padding:4px 4px 4px 4px}.g{height:4px;flex:none}</style>
<title-bar></title-bar><menu-bar></menu-bar><main-toolbar></main-toolbar>
<div class="v"><view-toolbar></view-toolbar><network-view></network-view></div><div class="g"></div>
<log-pane></log-pane><status-bar></status-bar><task-bar></task-bar>`);

/* label condensed horizontally so that it spans exactly w pixels */
def('fit-text','<style>:host{display:block;flex:none;white-space:pre;line-height:15px}span{display:inline-block;transform-origin:0 0}::slotted(u){text-underline-offset:2px}</style><span><slot></slot></span>',function(r){
  const s=r.querySelector('span'),w=+this.getAttribute('w');
  this.style.width=w+'px';
  s.style.transform=`translateY(-1px) scaleX(${w/s.offsetWidth})`;
});
</script>
</body>
</html>
